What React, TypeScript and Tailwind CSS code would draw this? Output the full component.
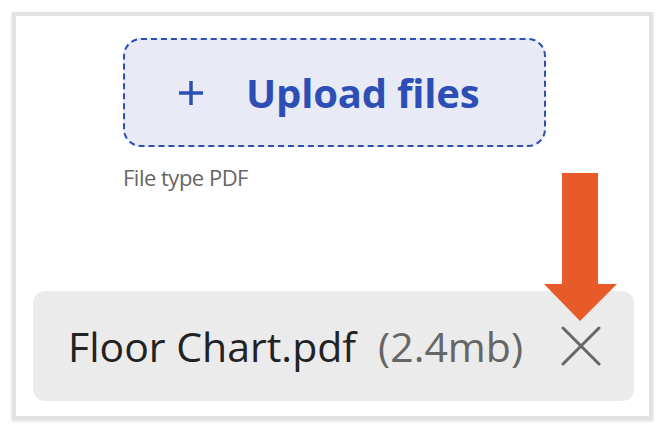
const ArrowDown = () => (
  <svg
    className="absolute left-[528px] top-[157px]"
    width="74"
    height="149"
    viewBox="0 0 74 149"
  >
    <path d="M18 0 H54 V111 H73 L36 148 L0 111 H18 Z" fill="#e85a2a" />
  </svg>
);

const PlusIcon = () => (
  <svg width="26" height="26" viewBox="0 0 26 26" fill="none">
    <path d="M13 1 V25 M1 13 H25" stroke="#2d4fb5" strokeWidth="3.5" />
  </svg>
);

const CloseIcon = () => (
  <svg width="40" height="40" viewBox="0 0 40 40" fill="none">
    <path
      d="M2 2 L38 38 M38 2 L2 38"
      stroke="#666666"
      strokeWidth="3"
      strokeLinecap="round"
    />
  </svg>
);

export default function App() {
  return (
    <div className="w-[664px] h-[434px] bg-white pt-[12px] pl-[12px]" style={{ fontFamily: '"Open Sans", "Noto Sans", sans-serif' }}>
      <div className="relative w-[641px] h-[408px] border-4 border-[#e2e2e2] bg-white shadow-[0_1px_3px_rgba(0,0,0,0.15)]">
        <div className="pl-[107px] pt-[22px]">
          <button className="flex items-center w-[423px] h-[109px] rounded-[18px] border-2 border-dashed border-[#2d4fb5] bg-[#e8eaf6] pl-[53px]">
            <PlusIcon />
            <span className="ml-[42px] text-[#2d4fb5] text-[40px] font-bold leading-none tracking-[-0.2px]">Upload files</span>
          </button>
          <p className="mt-[19px] text-[22px] leading-none text-[#666666] tracking-[-0.5px]">File type PDF</p>
        </div>

        <div className="mt-[103px] ml-[17px] flex items-center justify-between w-[601px] h-[110px] rounded-[12px] bg-[#ebebeb] pl-[35px] pr-[33px]">
          <div className="flex items-center">
            <span className="text-[41px] text-[#222222] leading-none">Floor Chart.pdf</span>
            <span className="ml-[22px] text-[41px] text-[#666666] leading-none">(2.4mb)</span>
          </div>
          <CloseIcon />
        </div>

        <ArrowDown />
      </div>
    </div>
  );
}
